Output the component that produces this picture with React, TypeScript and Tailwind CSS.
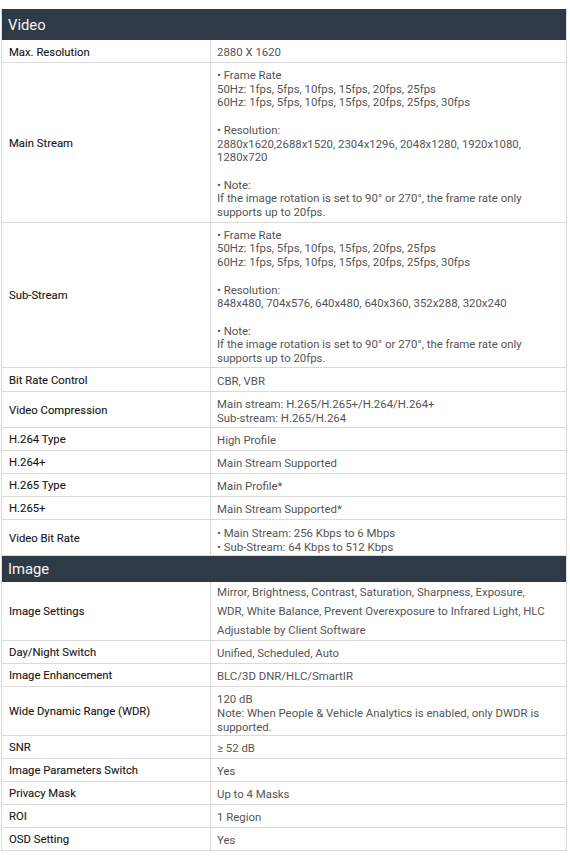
import React from "react";

type Row = {
  label: string;
  lines: string[];
  cls: string;
};

const one = "pt-[5px] pb-[3px] leading-[14px]";

const video: Row[] = [
  { label: "Max. Resolution", lines: ["2880 X 1620"], cls: one },
  {
    label: "Main Stream",
    lines: [
      "• Frame Rate",
      "50Hz: 1fps, 5fps, 10fps, 15fps, 20fps, 25fps",
      "60Hz: 1fps, 5fps, 10fps, 15fps, 20fps, 25fps, 30fps",
      "",
      "• Resolution:",
      "2880x1620,2688x1520, 2304x1296, 2048x1280, 1920x1080,",
      "1280x720",
      "",
      "• Note:",
      "If the image rotation is set to 90° or 270°, the frame rate only",
      "supports up to 20fps.",
    ],
    cls: "pt-[6px] pb-[2px] leading-[13.7px]",
  },
  {
    label: "Sub-Stream",
    lines: [
      "• Frame Rate",
      "50Hz: 1fps, 5fps, 10fps, 15fps, 20fps, 25fps",
      "60Hz: 1fps, 5fps, 10fps, 15fps, 20fps, 25fps, 30fps",
      "",
      "• Resolution:",
      "848x480, 704x576, 640x480, 640x360, 352x288, 320x240",
      "",
      "• Note:",
      "If the image rotation is set to 90° or 270°, the frame rate only",
      "supports up to 20fps.",
    ],
    cls: "pt-[6px] pb-[1px] leading-[13.7px]",
  },
  { label: "Bit Rate Control", lines: ["CBR, VBR"], cls: "pt-[6px] pb-[3px] leading-[14px]" },
  {
    label: "Video Compression",
    lines: ["Main stream: H.265/H.265+/H.264/H.264+", "Sub-stream: H.265/H.264"],
    cls: "pt-[5px] pb-[2px] leading-[14px]",
  },
  { label: "H.264 Type", lines: ["High Profile"], cls: one },
  { label: "H.264+", lines: ["Main Stream Supported"], cls: one },
  { label: "H.265 Type", lines: ["Main Profile*"], cls: one },
  { label: "H.265+", lines: ["Main Stream Supported*"], cls: one },
  {
    label: "Video Bit Rate",
    lines: ["• Main Stream: 256 Kbps to 6 Mbps", "• Sub-Stream: 64 Kbps to 512 Kbps"],
    cls: "pt-[6px] pb-[1px] leading-[14px]",
  },
];

const image: Row[] = [
  {
    label: "Image Settings",
    lines: [
      "Mirror, Brightness, Contrast, Saturation, Sharpness, Exposure,",
      "WDR, White Balance, Prevent Overexposure to Infrared Light, HLC",
      "Adjustable by Client Software",
    ],
    cls: "pt-[1px] pb-[0px] leading-[19px]",
  },
  { label: "Day/Night Switch", lines: ["Unified, Scheduled, Auto"], cls: one },
  { label: "Image Enhancement", lines: ["BLC/3D DNR/HLC/SmartIR"], cls: one },
  {
    label: "Wide Dynamic Range (WDR)",
    lines: [
      "120 dB",
      "Note: When People & Vehicle Analytics is enabled, only DWDR is",
      "supported.",
    ],
    cls: "pt-[5px] pb-[1px] leading-[14px]",
  },
  { label: "SNR", lines: ["≥ 52 dB"], cls: one },
  { label: "Image Parameters Switch", lines: ["Yes"], cls: one },
  { label: "Privacy Mask", lines: ["Up to 4 Masks"], cls: one },
  { label: "ROI", lines: ["1 Region"], cls: one },
  { label: "OSD Setting", lines: ["Yes"], cls: one },
];

function SpecRow({ row }: { row: Row }) {
  return (
    <div className="grid grid-cols-[209px_1fr] border-b border-[#dadada]">
      <div className="flex items-center border-r border-[#dadada] pl-[7px] pt-[4px] text-[11.3px] font-normal text-[#161616] [-webkit-text-stroke:0.1px_#161616]">
        {row.label}
      </div>
      <div className={`pl-[6px] pr-[10px] text-[11.4px] text-[#555555] whitespace-nowrap ${row.cls}`}>
        {row.lines.map((l, i) => (
          <div key={i}>{l === "" ? "\u00a0" : l}</div>
        ))}
      </div>
    </div>
  );
}

function Header({ title, h }: { title: string; h: string }) {
  return (
    <div className={`flex items-center bg-[#2e3b47] pl-[6px] pt-[1px] text-[14.8px] text-[#f4f4f4] ${h}`}>
      {title}
    </div>
  );
}

export default function App() {
  return (
    <div
      className="w-[570px] h-[856px] bg-white pt-[9px] overflow-hidden"
      style={{ fontFamily: "Roboto, 'Liberation Sans', Arial, sans-serif" }}
    >
      <div className="ml-[1px] w-[566px] border-l border-r border-[#dadada]">
        <Header title="Video" h="h-[31px]" />
        {video.map((r) => (
          <SpecRow key={r.label} row={r} />
        ))}
        <Header title="Image" h="h-[26px]" />
        {image.map((r) => (
          <SpecRow key={r.label} row={r} />
        ))}
      </div>
    </div>
  );
}
